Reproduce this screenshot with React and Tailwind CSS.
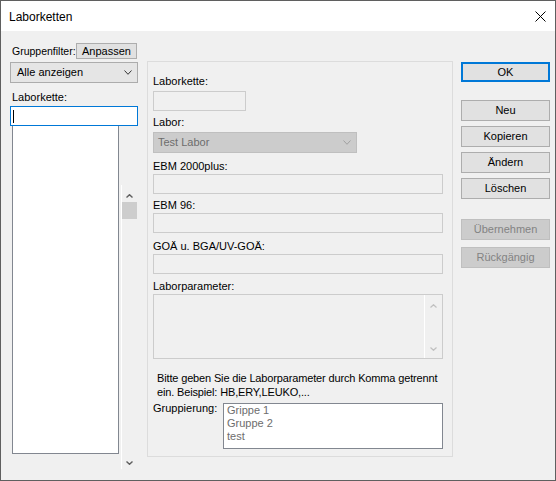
import React from 'react';

function Arrow({ up, color = '#606060', w = 7, h = 4, sw = 1.4, className = '' }) {
  const pts = up
    ? `0.5,${h - 0.5} ${w / 2},0.7 ${w - 0.5},${h - 0.5}`
    : `0.5,0.5 ${w / 2},${h - 0.7} ${w - 0.5},0.5`;
  return (
    <svg width={w} height={h} viewBox={`0 0 ${w} ${h}`} className={className}>
      <polyline points={pts} fill="none" stroke={color} strokeWidth={sw} />
    </svg>
  );
}

function Label({ children, className = '' }) {
  return <div className={`h-[13px] text-[11px] leading-[13px] whitespace-nowrap ${className}`}>{children}</div>;
}

function Field({ className = '' }) {
  return <div className={`h-[20px] border border-[#cccccc] bg-[#f0f0f0] ${className}`} />;
}

function Btn({ children, disabled, primary, className = '' }) {
  let look = 'h-[21px] border border-[#adadad] bg-[#e1e1e1] text-black';
  if (primary) look = 'h-[20px] border-2 border-[#0078d7] bg-[#e1e1e1] text-black';
  if (disabled) look = 'h-[21px] border border-[#bfbfbf] bg-[#cccccc] text-[#838383]';
  return (
    <div className={`w-[89px] flex items-center justify-center text-[11px] leading-[13px] ${look} ${className}`}>
      {children}
    </div>
  );
}

export default function App() {
  return (
    <div className="w-[556px] h-[481px] border border-[#5f5f5f] flex flex-col overflow-hidden text-black font-['Liberation_Sans',Arial,sans-serif]">
      <div className="h-[30px] bg-white flex items-center justify-between pl-[8px] pr-[9px]">
        <span className="text-[12px] leading-[14px] mt-[1px]">Laborketten</span>
        <svg width="11" height="11" viewBox="0 0 11 11">
          <path d="M0.5 0.5 L10.5 10.5 M10.5 0.5 L0.5 10.5" stroke="#000" strokeWidth="1" fill="none" />
        </svg>
      </div>

      <div className="flex-1 bg-[#f0f0f0] flex items-start pl-[9px] pt-[12px]">
        {/* left column */}
        <div className="w-[128px] flex flex-col">
          <div className="flex items-start h-[16px]">
            <div className="w-[64px] ml-[2px] mt-[2px] text-[10.5px] leading-[13px] whitespace-nowrap">Gruppenfilter:</div>
            <div className="w-[61px] h-[16px] border border-[#adadad] bg-[#e1e1e1] flex items-center justify-center text-[11px] leading-[13px]">
              Anpassen
            </div>
          </div>
          <div className="mt-[3px] h-[21px] border border-[#acacac] bg-[#e5e5e5] flex items-center justify-between pl-[6px] pr-[5px]">
            <span className="text-[11px] leading-[13px]">Alle anzeigen</span>
            <Arrow w={8} h={5} sw={1} color="#333" />
          </div>
          <Label className="mt-[8px] ml-[2px]">Laborkette:</Label>
          <div className="mt-[2px] h-[20px] border border-[#0078d7] bg-white">
            <div className="ml-[2px] mt-[3px] w-px h-[13px] bg-black" />
          </div>
          <div className="flex items-start">
            <div className="ml-[2px] w-[107px] h-[328px] border border-t-0 border-[#828790] bg-white" />
            <div className="ml-[2px] mt-[59px] w-[16px] h-[284px] border-l border-white flex flex-col pb-[4px]">
              <Arrow up className="mt-[9px] ml-[4px]" />
              <div className="mt-[4px] w-[15px] h-[17px] bg-[#cdcdcd]" />
              <Arrow className="mt-auto ml-[4px]" />
            </div>
          </div>
        </div>

        {/* middle group */}
        <div className="ml-[9px] mt-[18px] w-[306px] h-[396px] border border-[#dcdcdc] pl-[5px] pt-[13px] flex flex-col">
          <Label>Laborkette:</Label>
          <Field className="mt-[3px] w-[93px]" />
          <Label className="mt-[5px]">Labor:</Label>
          <div className="mt-[3px] w-[204px] h-[21px] border border-[#bfbfbf] bg-[#cccccc] flex items-center justify-between pl-[4px] pr-[5px]">
            <span className="text-[11px] leading-[13px] text-[#6d6d6d]">Test Labor</span>
            <Arrow w={8} h={5} sw={1} color="#a0a0a0" />
          </div>
          <Label className="mt-[7px]">EBM 2000plus:</Label>
          <Field className="mt-[1px] w-[290px]" />
          <Label className="mt-[5px]">EBM 96:</Label>
          <Field className="mt-[1px] w-[290px]" />
          <Label className="mt-[7px]">GOÄ u. BGA/UV-GOÄ:</Label>
          <Field className="mt-[1px] w-[290px]" />
          <Label className="mt-[6px]">Laborparameter:</Label>
          <div className="mt-[1px] w-[290px] h-[65px] border border-[#cccccc] bg-[#f0f0f0] flex justify-end">
            <div className="w-[18px] h-full border-l border-white flex flex-col items-center pt-[9px] pb-[7px]">
              <Arrow up color="#c0c0c0" sw={1.2} />
              <Arrow color="#c0c0c0" sw={1.2} className="mt-auto" />
            </div>
          </div>
          <div className="mt-[12px] ml-[4px] text-[11px] tracking-[-0.15px] leading-[14px] whitespace-nowrap">
            <div>Bitte geben Sie die Laborparameter durch Komma getrennt</div>
            <div>ein. Beispiel: HB,ERY,LEUKO,...</div>
          </div>
          <div className="mt-[4px] flex items-start">
            <div className="w-[70px] text-[11px] leading-[13px] -mt-px">Gruppierung:</div>
            <div className="w-[220px] h-[46px] border border-[#828790] bg-white pl-[3px] text-[11px] leading-[13px] text-[#6d6d6d]">
              <div>Grippe 1</div>
              <div>Gruppe 2</div>
              <div>test</div>
            </div>
          </div>
        </div>

        {/* buttons */}
        <div className="ml-[8px] mt-[19px] flex flex-col">
          <Btn primary>OK</Btn>
          <Btn className="mt-[18px]">Neu</Btn>
          <Btn className="mt-[5px]">Kopieren</Btn>
          <Btn className="mt-[5px]">Ändern</Btn>
          <Btn className="mt-[5px]">Löschen</Btn>
          <Btn disabled className="mt-[20px]">Übernehmen</Btn>
          <Btn disabled className="mt-[7px]">Rückgängig</Btn>
        </div>
      </div>
    </div>
  );
}
